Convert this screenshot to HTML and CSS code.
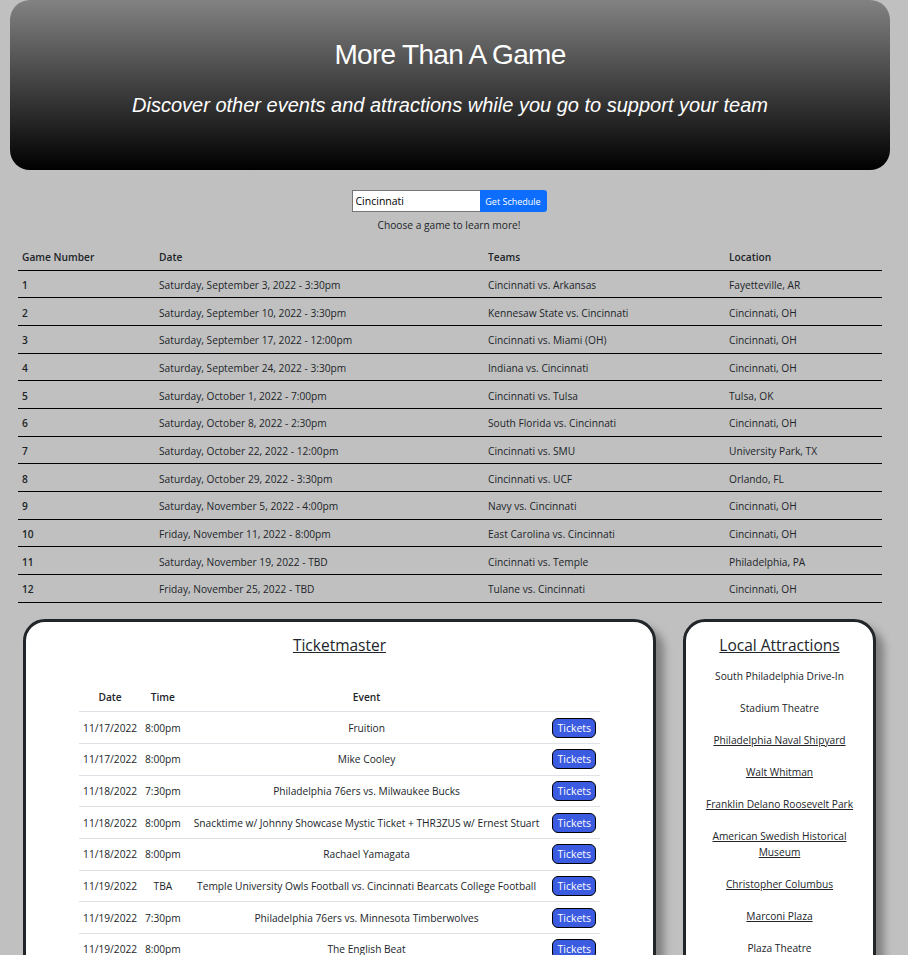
FILE: index.html
```html
<!DOCTYPE html>
<html>
<head>
<meta charset="utf-8">
<link rel="stylesheet" href="styles.css">
</head>
<body>
<header class="hero">
  <h1 class="hero-title">More Than A Game</h1>
  <p class="hero-sub">Discover other events and attractions while you go to support your team</p>
</header>

<section class="search">
  <div class="search-row">
    <input class="search-input" type="text" value="Cincinnati">
    <button class="search-btn">Get Schedule</button>
  </div>
  <p class="search-hint">Choose a game to learn more!</p>
</section>

<table class="schedule">
  <colgroup><col class="c1"><col class="c2"><col class="c3"><col class="c4"></colgroup>
  <thead>
    <tr><th>Game Number</th><th>Date</th><th>Teams</th><th>Location</th></tr>
  </thead>
  <tbody>
    <tr><th>1</th><td>Saturday, September 3, 2022 - 3:30pm</td><td>Cincinnati vs. Arkansas</td><td>Fayetteville, AR</td></tr>
    <tr><th>2</th><td>Saturday, September 10, 2022 - 3:30pm</td><td>Kennesaw State vs. Cincinnati</td><td>Cincinnati, OH</td></tr>
    <tr><th>3</th><td>Saturday, September 17, 2022 - 12:00pm</td><td>Cincinnati vs. Miami (OH)</td><td>Cincinnati, OH</td></tr>
    <tr><th>4</th><td>Saturday, September 24, 2022 - 3:30pm</td><td>Indiana vs. Cincinnati</td><td>Cincinnati, OH</td></tr>
    <tr><th>5</th><td>Saturday, October 1, 2022 - 7:00pm</td><td>Cincinnati vs. Tulsa</td><td>Tulsa, OK</td></tr>
    <tr><th>6</th><td>Saturday, October 8, 2022 - 2:30pm</td><td>South Florida vs. Cincinnati</td><td>Cincinnati, OH</td></tr>
    <tr><th>7</th><td>Saturday, October 22, 2022 - 12:00pm</td><td>Cincinnati vs. SMU</td><td>University Park, TX</td></tr>
    <tr><th>8</th><td>Saturday, October 29, 2022 - 3:30pm</td><td>Cincinnati vs. UCF</td><td>Orlando, FL</td></tr>
    <tr><th>9</th><td>Saturday, November 5, 2022 - 4:00pm</td><td>Navy vs. Cincinnati</td><td>Cincinnati, OH</td></tr>
    <tr><th>10</th><td>Friday, November 11, 2022 - 8:00pm</td><td>East Carolina vs. Cincinnati</td><td>Cincinnati, OH</td></tr>
    <tr><th>11</th><td>Saturday, November 19, 2022 - TBD</td><td>Cincinnati vs. Temple</td><td>Philadelphia, PA</td></tr>
    <tr><th>12</th><td>Friday, November 25, 2022 - TBD</td><td>Tulane vs. Cincinnati</td><td>Cincinnati, OH</td></tr>
  </tbody>
</table>

<div class="panels">
  <section class="card card-tm">
    <h2 class="card-title">Ticketmaster</h2>
    <table class="events">
      <thead><tr><th>Date</th><th>Time</th><th>Event</th><th></th></tr></thead>
      <tbody>
        <tr><td>11/17/2022</td><td>8:00pm</td><td>Fruition</td><td><a class="tix">Tickets</a></td></tr>
        <tr><td>11/17/2022</td><td>8:00pm</td><td>Mike Cooley</td><td><a class="tix">Tickets</a></td></tr>
        <tr><td>11/18/2022</td><td>7:30pm</td><td>Philadelphia 76ers vs. Milwaukee Bucks</td><td><a class="tix">Tickets</a></td></tr>
        <tr><td>11/18/2022</td><td>8:00pm</td><td>Snacktime w/ Johnny Showcase Mystic Ticket + THR3ZUS w/ Ernest Stuart</td><td><a class="tix">Tickets</a></td></tr>
        <tr><td>11/18/2022</td><td>8:00pm</td><td>Rachael Yamagata</td><td><a class="tix">Tickets</a></td></tr>
        <tr><td>11/19/2022</td><td>TBA</td><td>Temple University Owls Football vs. Cincinnati Bearcats College Football</td><td><a class="tix">Tickets</a></td></tr>
        <tr><td>11/19/2022</td><td>7:30pm</td><td>Philadelphia 76ers vs. Minnesota Timberwolves</td><td><a class="tix">Tickets</a></td></tr>
        <tr><td>11/19/2022</td><td>8:00pm</td><td>The English Beat</td><td><a class="tix">Tickets</a></td></tr>
      </tbody>
    </table>
  </section>
  <section class="card card-la">
    <h2 class="card-title">Local Attractions</h2>
    <p class="place">South Philadelphia Drive-In</p>
    <p class="place">Stadium Theatre</p>
    <p class="place"><a>Philadelphia Naval Shipyard</a></p>
    <p class="place"><a>Walt Whitman</a></p>
    <p class="place"><a>Franklin Delano Roosevelt Park</a></p>
    <p class="place"><a>American Swedish Historical Museum</a></p>
    <p class="place"><a>Christopher Columbus</a></p>
    <p class="place"><a>Marconi Plaza</a></p>
    <p class="place">Plaza Theatre</p>
  </section>
</div>
</body>
</html>
```

FILE: styles.css
```css
* { box-sizing: border-box; }
html, body { margin: 0; padding: 0; }
body {
  background: #c0c0c0;
  font-family: "Open Sans", "Noto Sans", sans-serif;
  font-size: 10.2px;
  color: #212529;
  overflow: hidden;
}
.hero {
  margin: 0 18px 0 10px;
  height: 170px;
  border-radius: 20px;
  background: linear-gradient(to bottom, #828282, #000000);
  color: #fff;
  text-align: center;
  font-family: "Liberation Sans", Arial, sans-serif;
  padding-top: 38px;
}
.hero-title {
  margin: 0;
  font-size: 28px;
  letter-spacing: -0.7px;
  font-weight: normal;
  line-height: 34px;
}
.hero-sub {
  margin: 21px 0 0;
  font-size: 20px;
  font-style: italic;
  line-height: 24px;
}
.search {
  margin-top: 20px;
  text-align: center;
}
.search-row {
  display: flex;
  justify-content: center;
  margin-left: -10px;
}
.search-input {
  width: 128px;
  height: 22px;
  border: 1px solid #767676;
  border-right: none;
  padding: 0 3px;
  font-family: inherit;
  font-size: 10.5px;
  color: #000;
  margin: 0;
}
.search-btn {
  height: 22px;
  width: 67px;
  background: #0d6efd;
  color: #fff;
  border: none;
  border-radius: 0 3px 3px 0;
  font-family: inherit;
  font-size: 9px;
  padding: 0;
  margin: 0;
}
.search-hint {
  margin: 6px 0 0;
  line-height: 14px;
  margin-left: -10px;
}
.schedule {
  margin: 12px 0 0 18px;
  width: 864px;
  border-collapse: collapse;
  table-layout: fixed;
}
.c1 { width: 137px; }
.c2 { width: 329px; }
.c3 { width: 241px; }
.c4 { width: 157px; }
.schedule th, .schedule td {
  text-align: left;
  padding: 2px 4px 0;
  height: 27.7px;
  border-bottom: 1px solid #000;
  line-height: 14px;
}
.schedule th { font-weight: 600; }
.schedule td { font-weight: normal; }
.schedule thead th { height: 26px; padding-top: 0; }
.panels {
  display: flex;
  gap: 27px;
  margin: 16px 0 0 23px;
  align-items: flex-start;
}
.card {
  background: #fff;
  border: 3px solid #212529;
  border-radius: 22px;
  box-shadow: 8px 8px 8px #808080;
}
.card-tm {
  width: 633px;
  height: 400px;
  padding-top: 12px;
}
.card-la {
  width: 193px;
  height: 400px;
  padding: 12px 12px 0;
  text-align: center;
}
.card-title {
  margin: 0;
  text-align: center;
  font-size: 15.5px;
  font-weight: normal;
  text-decoration: underline;
  line-height: 22px;
}
.events {
  margin: 27px auto 0;
  width: 521px;
  border-collapse: collapse;
}
.events th, .events td {
  text-align: center;
  padding: 0 3px;
  border-bottom: 1px solid #dee2e6;
  white-space: nowrap;
}
.events th { height: 29px; font-weight: 600; }
.events td { height: 31.7px; }
.tix {
  display: inline-block;
  background: #3b5be0;
  color: #fff;
  border: 1px solid #000;
  border-radius: 6px;
  padding: 2px 4px;
  font-size: 10.5px;
  line-height: 14px;
}
.place {
  margin: 16px 0 0;
  line-height: 16px;
}
.card-la .card-title + .place { margin-top: 12px; }
.place a {
  color: #212529;
  text-decoration: underline;
}
```
